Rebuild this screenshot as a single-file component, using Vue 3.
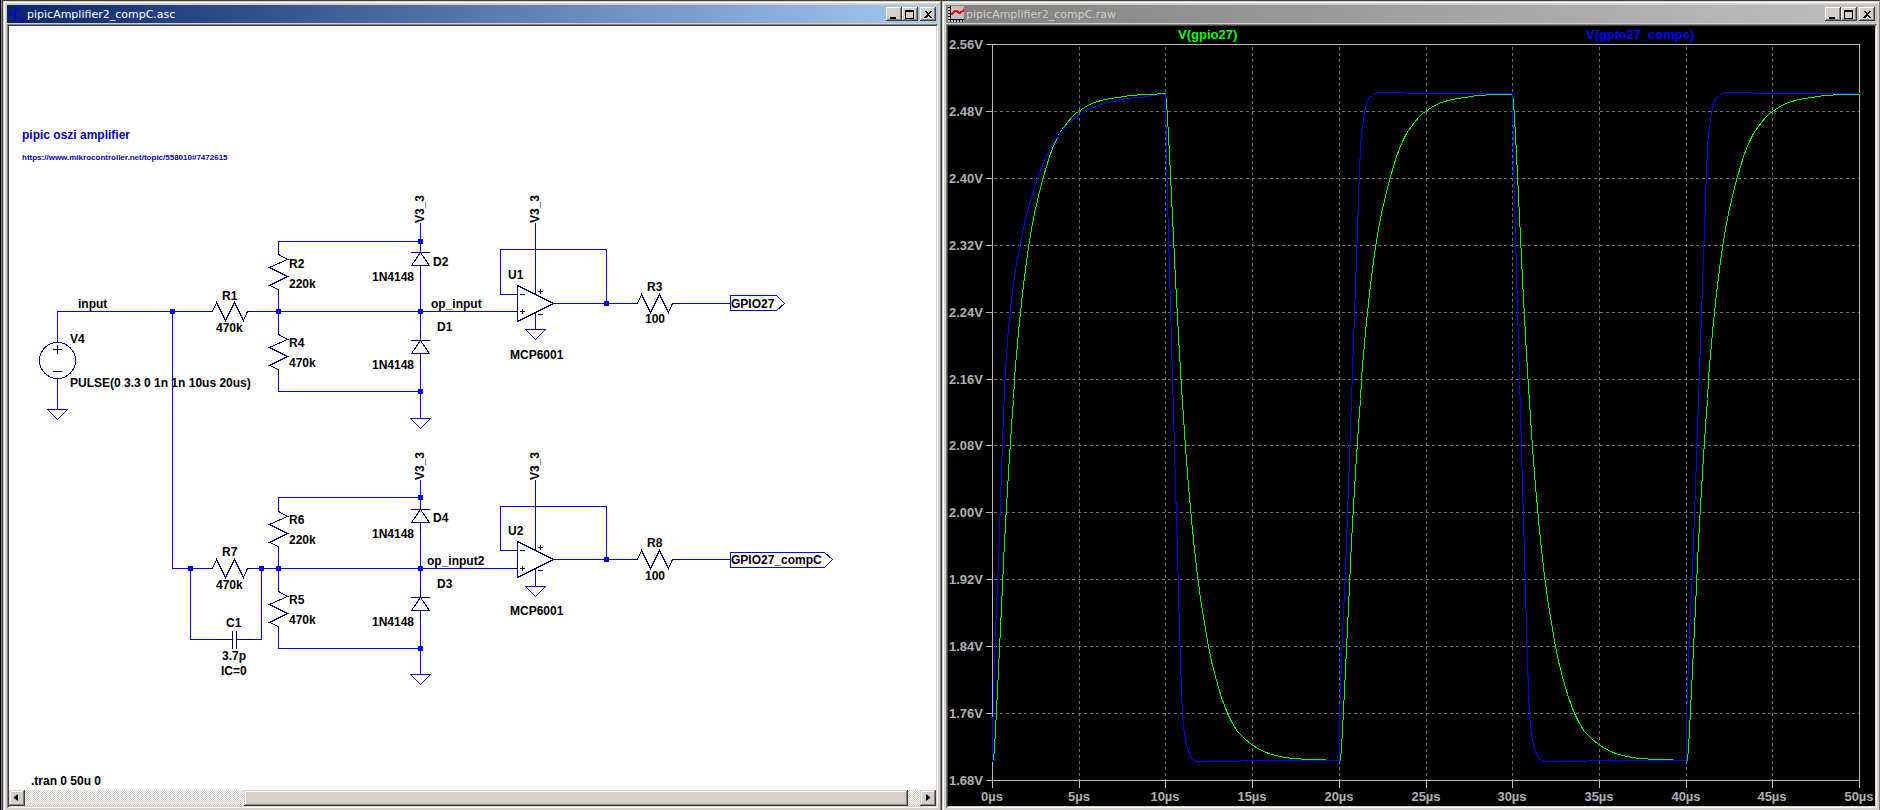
<script setup>
// ---------- schematic ----------
const wires = [
  'M57 342V311H208', 'M252 311H512', 'M57 382V409',
  'M278 249V241H420', 'M278 294V330', 'M278 373V391H420',
  'M420 223V243', 'M420 276V331', 'M420 363V418',
  'M172 311V568H208', 'M252 568H512',
  'M190 568V639H217', 'M252 639H261V568',
  'M278 506V497H420', 'M278 550V587', 'M278 630V648H420',
  'M420 480V499', 'M420 532V588', 'M420 620V674',
  'M535 223V286', 'M512 294H500V249H606V303', 'M558 303H633', 'M676 303H730', 'M535 320V329',
  'M535 480V542', 'M512 550H500V506H606V559', 'M558 559H633', 'M676 559H730', 'M535 577V586',
]
const nodes = [
  [172, 311], [278, 311], [420, 311], [420, 241], [420, 391], [606, 303],
  [190, 568], [261, 568], [278, 568], [420, 568], [420, 497], [420, 648], [606, 559],
]
const grounds = [[57, 409], [420, 418], [535, 329], [420, 674], [535, 586]]
const hResistors = [[212, 311], [212, 568], [637, 303], [637, 559]]
const vResistors = [[278, 254], [278, 334], [278, 511], [278, 591]]
const diodes = [[420, 252], [420, 340], [420, 509], [420, 597]]
const opAmps = [[517, 303], [517, 559]]
const flags = ['M730 295H776L784 303L776 310H730Z', 'M730 552H824L832 559L824 567H730Z']
const railLabels = [[424, 223], [539, 223], [424, 480], [539, 480]]

const labels = [
  ['input', 78, 308], ['V4', 70, 343], ['PULSE(0 3.3 0 1n 1n 10us 20us)', 70, 387],
  ['R1', 222, 300], ['470k', 216, 332], ['R2', 289, 268], ['220k', 289, 288],
  ['R4', 289, 347], ['470k', 289, 367], ['D2', 433, 266], ['1N4148', 372, 281],
  ['op_input', 431, 308], ['D1', 437, 331], ['1N4148', 372, 369],
  ['U1', 508, 279], ['MCP6001', 510, 359], ['R3', 647, 291], ['100', 645, 323], ['GPIO27', 731, 308],
  ['R7', 222, 556], ['470k', 216, 589], ['R6', 289, 524], ['220k', 289, 544],
  ['R5', 289, 604], ['470k', 289, 624], ['C1', 226, 627], ['3.7p', 222, 660], ['IC=0', 221, 675],
  ['D4', 433, 522], ['1N4148', 372, 538], ['op_input2', 427, 565], ['D3', 437, 588], ['1N4148', 372, 626],
  ['U2', 508, 535], ['MCP6001', 510, 615], ['R8', 647, 547], ['100', 645, 580],
  ['GPIO27_compC', 731, 564], ['.tran 0 50u 0', 31, 785],
]

// ---------- waveform ----------
const left = 992, right = 1859, top = 44, bottom = 780
const xTicks = Array.from({ length: 11 }, (_, i) => ({
  x: Math.round(left + ((right - left) * i) / 10), text: `${i * 5}µs`,
}))
const yTicks = Array.from({ length: 12 }, (_, i) => ({
  y: Math.round(top + ((bottom - top) * i) / 11), text: `${(2.56 - i * 0.08).toFixed(2)}V`,
}))

// Each edge: x offset from the edge's start, then y
const greenRise = '1 760 2 747 3 730 4 710 5 690 6 670 7 648 8 627 9 607 10 585 11 562 12 542 13 523 14 506 15 489 16 472 17 456 18 441 19 426 20 412 21 399 22 378 24 354 26 332 28 312 30 293 32 276 34 261 36 247 39 228 42 213 45 200 48 187 51 176 54 166 57 156 60 148 63 141 66 135 69 130 72 126 75 122 79 117 83 113 89 109 95 105 102 102 112 99 125 97 138 95 155 94 173 94'
const greenStart = greenRise.replace('155 94 173 94', '152 94 164 94 165 93 173 93')
const greenFall = '0 93 1 102 2 117 3 135 4 154 5 175 6 196 7 216 8 237 9 258 10 278 11 298 12 316 13 335 14 353 15 370 16 386 17 402 18 417 19 432 20 446 21 460 22 473 23 485 24 497 25 508 26 519 27 529 28 539 29 549 30 558 31 567 33 583 35 598 38 616 42 641 46 661 51 680 56 697 62 713 67 723 72 731 79 738 86 744 94 749 103 753 114 756 127 758 144 759 160 759 161 760 173 760'
const blueStart = '0 761 0 738 1 697 2 665 3 635 4 606 5 587 6 560 7 532 8 500 9 472 10 443 11 415 12 390 13 370 14 353 15 340 16 327 17 318 18 309 19 299 20 292 21 285 22 277 24 263 26 253 28 242 30 232 32 223 34 215 36 207 39 197 42 187 46 175 50 165 54 155 59 146 64 138 69 131 74 125 78 121 83 117 88 114 94 110 101 107 111 103 121 101 133 98 148 97 161 95 173 94'
const blueFall = '0 94 1 155 2 198 3 235 4 271 5 307 6 342 7 377 8 412 9 448 10 484 11 519 12 554 13 589 14 630 15 660 16 691 17 713 18 725 19 733 20 739 21 744 22 749 24 753 26 758 29 760 31 761 75 761 76 760 173 760'
const blueRise = '0 760 0 718 1 690 2 660 3 635 4 610 5 593 6 571 7 543 8 514 9 486 10 457 11 428 12 400 13 371 14 343 15 314 16 286 17 257 18 229 19 199 20 171 21 147 22 134 23 126 24 119 25 112 26 107 28 100 30 97 33 95 35 93 38 92 67 92 68 93 173 93'

const trace = (edges) => 'M' + edges.map((edge, i) => {
  const start = xTicks[i * 2].x
  return edge.split(' ').map((v, k) => (k % 2 ? v : Number(v) + start)).join(' ')
}).join(' L')
const greenTrace = trace([greenStart, greenFall, greenRise, greenFall, greenRise])
const blueTrace = trace([blueStart, blueFall, blueRise, blueFall, blueRise])

const captionButtons = [
  { name: 'Minimize', kind: 'min' }, { name: 'Maximize', kind: 'max' }, { name: 'Close', kind: 'close' },
]
</script>

<template>
  <main class="desk">
    <div class="windows">
      <section class="window">
        <header class="title">
          <svg class="app-icon" width="16" height="16" viewBox="0 0 16 16" shape-rendering="crispEdges">
            <path d="M0 8H4M5 3V13M6 3V13M6 6L14 0M6 10L14 15M10 15H14V11" fill="none" stroke="#0000ff" />
          </svg>
          <h1>pipicAmplifier2_compC.asc</h1>
          <div class="caption">
            <button v-for="b in captionButtons" :key="b.kind" type="button" :class="b.kind" :aria-label="b.name">
              <svg width="14" height="12" viewBox="0 0 14 12" shape-rendering="crispEdges">
                <path v-if="b.kind === 'min'" d="M3 9H9V11H3Z" />
                <path v-else-if="b.kind === 'max'" fill-rule="evenodd" d="M2 2H11V11H2ZM3 4V10H10V4Z" />
                <path v-else d="M3 3H5L7 5L9 3H11L8 6L11 10H9L7 8L5 10H3L6 6Z" />
              </svg>
            </button>
          </div>
        </header>
        <div class="client">
          <div class="sheet">
            <svg class="drawing" viewBox="9 26 927 764" preserveAspectRatio="xMinYMin meet">
              <g class="ink" transform="translate(.5 .5)">
                <path v-for="d in wires" :key="d" class="wire" :d="d" />
                <path v-for="([x, y], i) in grounds" :key="'g' + i" class="wire" :d="`M${x - 10} ${y}H${x + 10}L${x} ${y + 10}Z`" />
                <path v-for="d in flags" :key="d" class="wire" :d="d" />

                <path v-for="([x, y], i) in hResistors" :key="'h' + i" class="part"
                  :d="`M${x - 4} ${y}h4l4 -9l9 18l9 -18l9 18l4 -9h5`" />
                <path v-for="([x, y], i) in vResistors" :key="'v' + i" class="part"
                  :d="`M${x} ${y - 5}v5l9 5l-18 8l18 9l-18 9l9 4v5`" />
                <path v-for="([x, y], i) in diodes" :key="'d' + i" class="part"
                  :d="`M${x} ${y - 9}v9M${x - 9} ${y}h18M${x} ${y}l-9 13h18ZM${x} ${y + 13}v10`" />
                <path v-for="([x, y], i) in opAmps" :key="'o' + i" class="part"
                  :d="`M${x} ${y - 18}v36l36 -18ZM${x - 5} ${y - 9}h5M${x - 5} ${y + 8 + i}h5M${x + 36} ${y}h5M${x + 3} ${y - 9}h4M${x + 3} ${y + 8 + i}h4M${x + 5} ${y + 6 + i}v4M${x + 18} ${y - 17}v8M${x + 18} ${y + 9}v8M${x + 21} ${y - 12}h4M${x + 23} ${y - 14}v4M${x + 21} ${y + 11}h4`" />
                <path class="part" d="M217 639H232M232 631V648M236 631V648M236 639H252" />
                <circle class="part" cx="57" cy="360" r="18" />
                <path class="part" d="M53 349H61M57 345V353M53 371H61M57 378V382" />
              </g>
              <rect v-for="([x, y], i) in nodes" :key="'n' + i" class="node" :x="x - 2" :y="y - 2" width="5" height="5" />
              <text v-for="([t, x, y], i) in labels" :key="'t' + i" :x="x" :y="y">{{ t }}</text>
              <text v-for="([x, y], i) in railLabels" :key="'r' + i" :transform="`translate(${x} ${y}) rotate(-90)`">V3_3</text>
              <text class="note" x="22" y="139">pipic oszi amplifier</text>
              <a href="https://www.mikrocontroller.net/topic/558010#7472615">
                <text class="note link" x="22" y="160">https://www.mikrocontroller.net/topic/558010#7472615</text>
              </a>
            </svg>
          </div>
          <div class="scrollbar">
            <button type="button" class="arrow" aria-label="Scroll left">
              <svg width="12" height="12" viewBox="0 0 12 12"><path d="M7 2V9L3 6V5Z" /></svg>
            </button>
            <div class="track before"></div>
            <div class="thumb"></div>
            <div class="track after"></div>
            <button type="button" class="arrow" aria-label="Scroll right">
              <svg width="12" height="12" viewBox="0 0 12 12"><path d="M4 2V9L8 6V5Z" /></svg>
            </button>
          </div>
        </div>
      </section>

      <section class="window inactive">
        <header class="title">
          <svg class="app-icon" width="16" height="16" viewBox="0 0 16 16" shape-rendering="crispEdges">
            <rect width="16" height="16" fill="#c0c0c0" />
            <path d="M2 0H3V13H16V14H15V16H14V14H12V16H11V14H9V16H8V14H6V16H5V14H3V16H2V14H0V13H2V11H0V10H2V8H0V7H2V5H0V4H2V2H0V1H2Z" />
            <path d="M3 9L7 5H9L11 7H12L16 4" fill="none" stroke="#ff0000" stroke-width="2" />
          </svg>
          <h1>pipicAmplifier2_compC.raw</h1>
          <div class="caption">
            <button v-for="b in captionButtons" :key="b.kind" type="button" :class="b.kind" :aria-label="b.name">
              <svg width="14" height="12" viewBox="0 0 14 12" shape-rendering="crispEdges">
                <path v-if="b.kind === 'min'" d="M3 9H9V11H3Z" />
                <path v-else-if="b.kind === 'max'" fill-rule="evenodd" d="M2 2H11V11H2ZM3 4V10H10V4Z" />
                <path v-else d="M3 3H5L7 5L9 3H11L8 6L11 10H9L7 8L5 10H3L6 6Z" />
              </svg>
            </button>
          </div>
        </header>
        <div class="client dark">
          <div class="sheet">
            <svg class="drawing plot" viewBox="948 26 927 780" preserveAspectRatio="xMinYMin meet">
              <g class="ink" transform="translate(.5 .5)">
                <path v-for="t in xTicks.slice(1, -1)" :key="'gx' + t.x" class="grid" :d="`M${t.x} ${top + 2}V${bottom}`" />
                <path v-for="t in yTicks.slice(1, -1)" :key="'gy' + t.y" class="grid" :d="`M${left + 1} ${t.y}H${right}`" />
                <path class="axis" :d="`M${left} ${top}H${right}V${bottom}H${left}Z`" />
                <path v-for="t in xTicks" :key="'x' + t.x" class="axis" :d="`M${t.x} ${bottom}v7`" />
                <path v-for="t in yTicks" :key="'y' + t.y" class="axis" :d="`M${left - 7} ${t.y}h7`" />
                <path class="green" :d="greenTrace" />
                <path class="blue" :d="blueTrace" />
              </g>
              <text v-for="t in yTicks" :key="t.text" class="tick" x="949" :y="t.y + 5">{{ t.text }}</text>
              <text v-for="t in xTicks" :key="t.text" class="tick" text-anchor="middle" :x="t.x" :y="bottom + 21">{{ t.text }}</text>
              <text class="name-a" x="1178" y="39">V(gpio27)</text>
              <text class="name-b" x="1586" y="39">V(gpio27_compc)</text>
            </svg>
          </div>
        </div>
      </section>
    </div>
  </main>
</template>

<style>
body {
  margin: 0;
  overflow: hidden;
}
</style>

<style scoped>
.desk {
  display: flex;
  height: 100vh;
  overflow: hidden;
  background: linear-gradient(90deg, #000010 1px, #808080 1px, #808080 2px, #404040 2px);
}
.windows {
  flex: 1;
  display: grid;
  grid-template-columns: minmax(0, 1fr) minmax(0, 1fr);
  margin: 1px -1px -2px 3px;
}
.window {
  box-sizing: border-box;
  display: flex;
  flex-direction: column;
  gap: 1px;
  min-height: 0;
  padding: 4px;
  background: #d4d0c8;
  box-shadow: inset -1px -1px #404040, inset 1px 1px #d4d0c8, inset -2px -2px #808080, inset 2px 2px #ffffff;
}
.title {
  box-sizing: border-box;
  display: flex;
  align-items: center;
  height: 18px;
  padding: 0 2px;
  background: linear-gradient(90deg, #0a246a, #a6caf0);
  color: #ffffff;
}
.inactive .title {
  background: linear-gradient(90deg, #808080, #c0c0c0);
  color: #d4d0c8;
}
.app-icon {
  margin-right: 2px;
}
h1 {
  flex: 1;
  margin: 0;
  padding-top: 2px;
  font: 11px/16px "DejaVu Sans", sans-serif;
  white-space: nowrap;
}
.caption {
  display: flex;
}
button {
  box-sizing: border-box;
  display: block;
  width: 16px;
  height: 14px;
  margin: 0;
  padding: 1px;
  border: 0;
  background: #d4d0c8;
  box-shadow: inset -1px -1px #404040, inset 1px 1px #ffffff, inset -2px -2px #808080;
}
button svg {
  display: block;
}
.close {
  margin-left: 2px;
}
.client {
  flex: 1;
  display: flex;
  flex-direction: column;
  min-height: 0;
  padding: 2px;
  background: #ffffff;
  box-shadow: inset 1px 1px #808080, inset -1px -1px #ffffff, inset 2px 2px #404040, inset -2px -2px #d4d0c8;
}
.dark {
  background: #000000;
}
.sheet {
  flex: 1;
  min-height: 0;
}
.drawing {
  display: block;
  width: 100%;
  height: 100%;
}
.drawing text {
  font: bold 12px "Liberation Sans", Arial, sans-serif;
  fill: #000000;
}
.drawing .note {
  fill: #0000c8;
}
.drawing .link {
  font-size: 8px;
}
.ink {
  fill: none;
  shape-rendering: crispEdges;
}
.wire {
  stroke: #0000ff;
  stroke-linecap: square;
}
.part {
  stroke: #000080;
  stroke-linecap: square;
}
.node {
  fill: #0000ff;
}
.drawing.plot text {
  font-size: 13px;
}
.plot .tick {
  fill: #b0b0b0;
}
.plot .name-a {
  fill: #00ff00;
}
.plot .name-b {
  fill: #0000ff;
}
.grid {
  stroke: #707070;
  stroke-dasharray: 3 3;
}
.axis {
  stroke: #b8b8b8;
}
.green {
  stroke: #00ff00;
}
.blue {
  stroke: #0000ff;
}
.scrollbar {
  display: flex;
  height: 16px;
}
.arrow {
  flex: none;
  height: 16px;
  padding: 2px;
}
.arrow,
.thumb {
  background: #d4d0c8;
  box-shadow: inset -1px -1px #404040, inset 1px 1px #d4d0c8, inset -2px -2px #808080, inset 2px 2px #ffffff;
}
.track {
  background: conic-gradient(#d4d0c8 25%, #ffffff 0 50%, #d4d0c8 0 75%, #ffffff 0) 0 0 / 2px 2px;
}
.before {
  flex: 219;
}
.thumb {
  flex: 664;
}
.after {
  flex: 12;
}
</style>
